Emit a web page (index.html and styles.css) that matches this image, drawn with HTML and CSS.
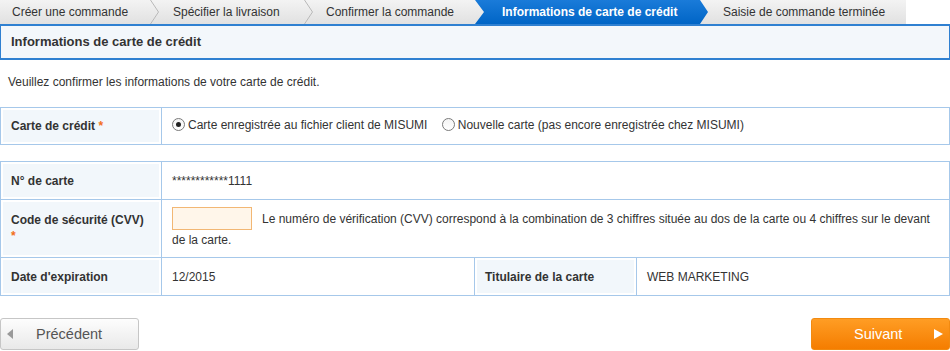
FILE: index.html
```html
<!DOCTYPE html>
<html lang="fr">
<head>
<meta charset="utf-8">
<title>Informations de carte de crédit</title>
<link rel="stylesheet" href="styles.css">
</head>
<body>
<div class="steps">
  <div class="step s1">Créer une commande</div>
  <svg class="chev" width="10" height="24" viewBox="0 0 10 24"><polyline points="0.5,0 8.5,12 0.5,24" fill="none" stroke="#b9b9b9" stroke-width="1"/></svg>
  <div class="step s2">Spécifier la livraison</div>
  <svg class="chev" width="10" height="24" viewBox="0 0 10 24"><polyline points="0.5,0 8.5,12 0.5,24" fill="none" stroke="#b9b9b9" stroke-width="1"/></svg>
  <div class="step s3">Confirmer la commande</div>
  <div class="step active">Informations de carte de crédit</div>
  <div class="step s5">Saisie de commande terminée</div>
</div>

<h1 class="title">Informations de carte de crédit</h1>

<p class="intro">Veuillez confirmer les informations de votre carte de crédit.</p>

<table class="form t1">
  <tr>
    <th class="lbl">Carte de crédit <span class="req">*</span></th>
    <td class="val">
      <label class="radio"><span class="dot checked"></span>Carte enregistrée au fichier client de MISUMI</label>
      <label class="radio r2"><span class="dot"></span>Nouvelle carte (pas encore enregistrée chez MISUMI)</label>
    </td>
  </tr>
</table>

<table class="form t2">
  <tr class="row-a">
    <th class="lbl">N° de carte</th>
    <td class="val" colspan="3">************1111</td>
  </tr>
  <tr class="row-b">
    <th class="lbl top">Code de sécurité (CVV)<br><span class="req">*</span></th>
    <td class="val top" colspan="3"><span class="cvv"></span>Le numéro de vérification (CVV) correspond à la combination de 3 chiffres située au dos de la carte ou 4 chiffres sur le devant de la carte.</td>
  </tr>
  <tr class="row-c">
    <th class="lbl">Date d'expiration</th>
    <td class="val c2">12/2015</td>
    <th class="lbl c3">Titulaire de la carte</th>
    <td class="val">WEB MARKETING</td>
  </tr>
</table>

<div class="actions">
  <button class="btn prev"><span class="tri-l"></span>Précédent</button>
  <button class="btn next">Suivant<span class="tri-r"></span></button>
</div>
</body>
</html>
```

FILE: styles.css
```css
* { box-sizing: border-box; }
body {
  margin: 0;
  width: 950px;
  font-family: "Liberation Sans", Arial, sans-serif;
  font-size: 12px;
  color: #333;
  background: #fff;
}

.steps {
  display: flex;
  width: 906px;
  height: 24px;
  background: linear-gradient(#f3f3f3, #e1e1e1);
}
.step {
  height: 24px;
  line-height: 24px;
  font-size: 12px;
  color: #333;
  white-space: nowrap;
}
.chev { flex: none; display: block; }
.s1 { width: 150px; padding-left: 12px; }
.s2 { width: 144px; padding-left: 13px; }
.s3 { width: 161px; padding-left: 12px; }
.active {
  width: 233px;
  padding-left: 27px;
  color: #fff;
  font-weight: bold;
  background: linear-gradient(#1a7bd9, #0065c6);
  clip-path: polygon(0 0, 225px 0, 233px 50%, 225px 100%, 0 100%, 9px 50%);
}
.s5 { width: 198px; padding-left: 15px; }

.title {
  margin: 0;
  height: 36px;
  line-height: 32px;
  padding-left: 10px;
  font-size: 13px;
  font-weight: bold;
  color: #333;
  background: #f3f7fb;
  border: 1px solid #2f80d1;
  border-top-width: 2px;
  border-bottom-width: 2px;
}

.intro {
  margin: 14px 0 17px 8px;
  line-height: 16px;
}

.form {
  width: 950px;
  border-collapse: collapse;
  border: 1px solid #a6c8ea;
}
.form th, .form td {
  border: 1px solid #a6c8ea;
  text-align: left;
  vertical-align: middle;
  font-size: 12px;
}
.lbl {
  width: 161px;
  padding: 0 0 0 10px;
  font-weight: bold;
  background: #f2f7fb;
  box-shadow: inset 0 0 0 2px #fff;
  color: #333;
}
.val {
  padding: 0 0 0 10px;
  color: #333;
}
.req { color: #f26f1c; font-weight: bold; }

.t1 { margin-bottom: 16px; }
.t1 tr { height: 37px; }

.radio {
  display: inline-flex;
  align-items: center;
  margin-right: 11px;
}
.dot {
  width: 13px;
  height: 13px;
  border: 1px solid #7a7a7a;
  border-radius: 50%;
  background: linear-gradient(#f4f4f4, #fff);
  margin-right: 3px;
  position: relative;
}
.dot.checked::after {
  content: "";
  position: absolute;
  left: 3px;
  top: 3px;
  width: 5px;
  height: 5px;
  border-radius: 50%;
  background: #222;
}

.row-a { height: 38px; }
.row-b { height: 58px; }
.row-c { height: 38px; }
.top { vertical-align: top !important; }
th.top { padding-top: 12px; line-height: 16px; }
td.top { padding-top: 9px; padding-right: 14px; line-height: 20px; }
.cvv {
  display: inline-block;
  vertical-align: middle;
  width: 80px;
  height: 23px;
  margin: -3px 10px 0 0;
  border: 1px solid #f2b774;
  background: #fff6ea;
}
.c2 { width: 313px; }
.c3 { width: 162px; }

.actions {
  display: flex;
  justify-content: space-between;
  margin-top: 22px;
}
.btn {
  display: flex;
  align-items: center;
  width: 139px;
  height: 32px;
  border-radius: 3px;
  font-family: "Liberation Sans", Arial, sans-serif;
  font-size: 14.5px;
  padding: 0;
  cursor: pointer;
}
.prev {
  border: 1px solid #c6c6c6;
  background: linear-gradient(#fdfdfd, #e9e9e9);
  color: #555;
  padding-left: 6px;
}
.tri-l {
  width: 0; height: 0;
  border-top: 5px solid transparent;
  border-bottom: 5px solid transparent;
  border-right: 6px solid #999;
  margin-right: 23px;
}
.next {
  border: 1px solid #f28a10;
  background: linear-gradient(#ff9d24, #f57d00);
  color: #fff;
  padding-left: 42px;
}
.tri-r {
  width: 0; height: 0;
  border-top: 5px solid transparent;
  border-bottom: 5px solid transparent;
  border-left: 9px solid #fff;
  margin-left: 32px;
}
```
